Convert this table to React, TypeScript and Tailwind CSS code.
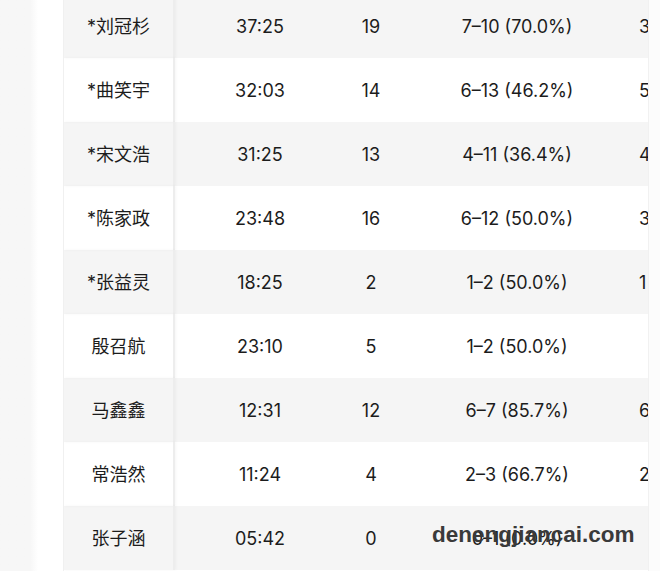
const rows = [
  { name: "*刘冠杉", time: "37:25", pts: "19", fg: "7–10 (70.0%)", next: "3" },
  { name: "*曲笑宇", time: "32:03", pts: "14", fg: "6–13 (46.2%)", next: "5" },
  { name: "*宋文浩", time: "31:25", pts: "13", fg: "4–11 (36.4%)", next: "4" },
  { name: "*陈家政", time: "23:48", pts: "16", fg: "6–12 (50.0%)", next: "3" },
  { name: "*张益灵", time: "18:25", pts: "2", fg: "1–2 (50.0%)", next: "1" },
  { name: "殷召航", time: "23:10", pts: "5", fg: "1–2 (50.0%)", next: "" },
  { name: "马鑫鑫", time: "12:31", pts: "12", fg: "6–7 (85.7%)", next: "6" },
  { name: "常浩然", time: "11:24", pts: "4", fg: "2–3 (66.7%)", next: "2" },
  { name: "张子涵", time: "05:42", pts: "0", fg: "0–1 (0.0%)", next: "" },
];

export default function App() {
  return (
    <div
      className="relative flex h-[571px] w-[660px] overflow-hidden bg-white text-[18px] text-[#1c1c1c]"
      style={{ fontFamily: "Inter, 'Noto Sans CJK SC', sans-serif" }}
    >
      <div className="w-[38px] shrink-0 bg-gradient-to-r from-[#f7f7f7] from-80% to-white" />
      <div className="w-[26px] shrink-0 border-r border-[#f0f0f0] bg-white" />
      <div className="w-[584px] shrink-0 overflow-hidden">
        <div className="-mt-[6px] w-[700px]">
          {rows.map((r, i) => (
            <div
              key={r.name}
              className={`grid h-[64px] grid-cols-[111px_170px_52px_240px_127px] items-center ${
                i % 2 === 0 ? "bg-[#f5f5f5]" : "bg-white"
              }`}
            >
              <div className="flex h-full items-center justify-center border-r-2 border-[#ededed] shadow-[1px_0_3px_rgba(0,0,0,0.04)]">
                {r.name}
              </div>
              <div className="text-center">{r.time}</div>
              <div className="text-center">{r.pts}</div>
              <div className="text-center">{r.fg}</div>
              <div className="pl-[2px] text-left">{r.next}</div>
            </div>
          ))}
        </div>
      </div>
      <div className="flex-1 border-l border-[#f1f1f1] bg-[#fcfcfc]" />
      <div
        className="absolute left-[432px] top-[520px] text-[22.5px] font-bold leading-[30px] text-[#3a3a3a]"
        style={{ fontFamily: "'Liberation Sans', Arial, sans-serif" }}
      >
        denengjiancai.com
      </div>
    </div>
  );
}
